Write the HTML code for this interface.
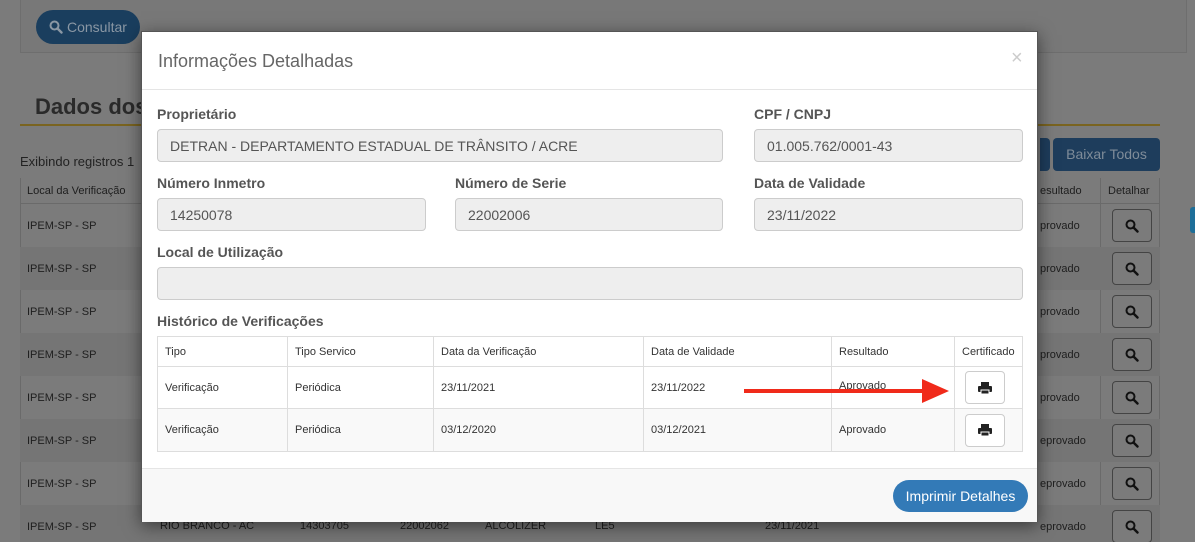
<!DOCTYPE html>
<html><head><meta charset="utf-8"><style>
*{box-sizing:border-box;margin:0;padding:0}
html,body{width:1195px;height:542px;overflow:hidden}
body{background:#7b7b7b;font-family:"Liberation Sans",sans-serif;position:relative;color:#333}
.a{position:absolute}
.bg{color:#1e1e1e;font-size:11px}
.row{position:absolute;left:20px;width:1140px;height:43px}
.lbl{position:absolute;font-size:14px;font-weight:bold;color:#555}
.inp{position:absolute;height:33px;background:#eee;border:1px solid #ccc;border-radius:4px;font-size:14px;color:#555;padding:8px 12px;line-height:16px}
table{border-collapse:collapse;font-size:11px;color:#333}
td,th{border:1px solid #ddd;font-weight:normal;text-align:left;padding:0 7px}
.pb{width:40px;height:33px;border:1px solid #ccc;border-radius:4px;background:#fff;margin-left:3px;display:flex;align-items:center;justify-content:center}
.sb{position:absolute;left:1112px;width:40px;height:33px;border:1px solid #444;border-radius:4px;background:#7b7b7b;display:flex;align-items:center;justify-content:center}
</style></head><body>
<svg width="0" height="0" style="position:absolute"><defs><g id="mg"><circle cx="5.5" cy="5.5" r="4" fill="none" stroke-width="2"/><line x1="8.5" y1="8.5" x2="12.5" y2="12.5" stroke-width="2.4" stroke-linecap="round"/></g></defs></svg>
<div class="a" style="left:20px;top:0;width:1167px;height:53px;border:1px solid #6e6e6e;border-top:none;background:#787878"></div>
<div class="a" style="left:36px;top:10px;width:104px;height:34px;border-radius:17px;background:#1a3e5e;color:#8a97a4;font-size:14px;line-height:34px;padding-left:31px">Consultar</div>
<svg class="a" style="left:49px;top:20px" width="14" height="14"><use href="#mg" stroke="#8a97a4"/></svg>
<div class="a" style="left:35px;top:94px;font-size:22px;font-weight:bold;color:#2a2a2a">Dados dos</div>
<div class="a" style="left:20px;top:124px;width:1140px;height:2px;background:#7a6420"></div>
<div class="a" style="left:20px;top:154px;font-size:13px;color:#222">Exibindo registros 1</div>
<div class="a" style="left:1040px;top:138px;width:10px;height:33px;background:#1e3d5c;border-radius:0 4px 4px 0"></div>
<div class="a" style="left:1053px;top:138px;width:107px;height:33px;background:#1e3d5c;border-radius:4px;color:#7f8c99;font-size:14px;line-height:33px;text-align:center">Baixar Todos</div>
<div class="a" style="left:1190px;top:207px;width:5px;height:26px;background:#1e6f99;border-radius:3px 0 0 3px"></div>
<div class="a" style="left:20px;top:178px;width:1140px;height:364px;border-left:1px solid #6a6a6a;border-right:1px solid #6a6a6a"></div>
<div class="row" style="top:178px;height:26px;border-bottom:1px solid #6a6a6a"></div>
<div class="a bg" style="left:27px;top:185px">Local da Verificação</div>
<div class="a bg" style="left:1040px;top:185px">esultado</div>
<div class="a bg" style="left:1108px;top:185px">Detalhar</div>
<div class="a" style="left:1100px;top:178px;width:1px;height:364px;background:#6a6a6a"></div>
<div class="row" style="top:247px;background:#757575"></div>
<div class="row" style="top:333px;background:#757575"></div>
<div class="row" style="top:419px;background:#757575"></div>
<div class="row" style="top:505px;background:#757575"></div>
<div class="a bg" style="left:27px;top:205px;line-height:43px">IPEM-SP - SP<br>IPEM-SP - SP<br>IPEM-SP - SP<br>IPEM-SP - SP<br>IPEM-SP - SP<br>IPEM-SP - SP<br>IPEM-SP - SP<br>IPEM-SP - SP</div>
<div class="a bg" style="left:1040px;top:205px;line-height:43px">provado<br>provado<br>provado<br>provado<br>provado<br>eprovado<br>eprovado<br>eprovado</div>
<div class="sb" style="top:209px"><svg width="14" height="14"><use href="#mg" stroke="#111"/></svg></div>
<div class="sb" style="top:252px"><svg width="14" height="14"><use href="#mg" stroke="#111"/></svg></div>
<div class="sb" style="top:295px"><svg width="14" height="14"><use href="#mg" stroke="#111"/></svg></div>
<div class="sb" style="top:338px"><svg width="14" height="14"><use href="#mg" stroke="#111"/></svg></div>
<div class="sb" style="top:381px"><svg width="14" height="14"><use href="#mg" stroke="#111"/></svg></div>
<div class="sb" style="top:424px"><svg width="14" height="14"><use href="#mg" stroke="#111"/></svg></div>
<div class="sb" style="top:467px"><svg width="14" height="14"><use href="#mg" stroke="#111"/></svg></div>
<div class="sb" style="top:510px"><svg width="14" height="14"><use href="#mg" stroke="#111"/></svg></div>
<div class="a bg" style="left:160px;top:520px">RIO BRANCO - AC</div>
<div class="a bg" style="left:300px;top:520px">14303705</div>
<div class="a bg" style="left:400px;top:520px">22002062</div>
<div class="a bg" style="left:485px;top:520px">ALCOLIZER</div>
<div class="a bg" style="left:595px;top:520px">LE5</div>
<div class="a bg" style="left:765px;top:520px">23/11/2021</div>

<div class="a" style="left:141px;top:31px;width:897px;height:491px;background:#fff;border:1px solid #555;box-shadow:0 4px 16px rgba(0,0,0,.5)">
<div class="a" style="left:16px;top:19px;font-size:18px;color:#666">Informações Detalhadas</div>
<div class="a" style="left:869px;top:15px;font-size:20px;color:#ccc">×</div>
<div class="a" style="left:0;top:57px;width:895px;height:1px;background:#e5e5e5"></div>
<div class="a" style="left:0;top:436px;width:895px;height:54px;background:#f8f8f8;border-top:1px solid #e5e5e5"></div>
<div class="a" style="left:751px;top:448px;width:135px;height:32px;border-radius:16px;background:#337ab7;color:#fff;font-size:14px;line-height:32px;text-align:center">Imprimir Detalhes</div>
</div>
<div class="lbl" style="left:157px;top:106px">Proprietário</div>
<div class="lbl" style="left:754px;top:106px">CPF / CNPJ</div>
<div class="inp" style="left:157px;top:129px;width:566px">DETRAN - DEPARTAMENTO ESTADUAL DE TRÂNSITO / ACRE</div>
<div class="inp" style="left:754px;top:129px;width:269px">01.005.762/0001-43</div>
<div class="lbl" style="left:157px;top:175px">Número Inmetro</div>
<div class="lbl" style="left:455px;top:175px">Número de Serie</div>
<div class="lbl" style="left:754px;top:175px">Data de Validade</div>
<div class="inp" style="left:157px;top:198px;width:269px">14250078</div>
<div class="inp" style="left:455px;top:198px;width:268px">22002006</div>
<div class="inp" style="left:754px;top:198px;width:269px">23/11/2022</div>
<div class="lbl" style="left:157px;top:244px">Local de Utilização</div>
<div class="inp" style="left:157px;top:267px;width:866px"></div>
<div class="lbl" style="left:157px;top:313px">Histórico de Verificações</div>
<table class="a" style="left:157px;top:336px;width:866px">
<tr style="height:30px"><th style="width:130px">Tipo</th><th style="width:146px">Tipo Servico</th><th style="width:210px">Data da Verificação</th><th style="width:188px">Data de Validade</th><th style="width:123px">Resultado</th><th>Certificado</th></tr>
<tr style="height:42px"><td>Verificação</td><td>Periódica</td><td>23/11/2021</td><td>23/11/2022</td><td style="vertical-align:top;padding-top:13px">Aprovado</td><td><div class="pb"><svg width="14" height="12" viewBox="0 0 14 12"><rect x="3" y="0" width="8" height="4" fill="#222"/><rect x="0" y="4" width="14" height="6" rx="1" fill="#222"/><rect x="3" y="8" width="8" height="4" fill="#222" stroke="#fff" stroke-width="1"/></svg></div></td></tr>
<tr style="height:43px;background:#f9f9f9"><td>Verificação</td><td>Periódica</td><td>03/12/2020</td><td>03/12/2021</td><td>Aprovado</td><td><div class="pb"><svg width="14" height="12" viewBox="0 0 14 12"><rect x="3" y="0" width="8" height="4" fill="#222"/><rect x="0" y="4" width="14" height="6" rx="1" fill="#222"/><rect x="3" y="8" width="8" height="4" fill="#222" stroke="#fff" stroke-width="1"/></svg></div></td></tr>
</table>
<svg class="a" style="left:744px;top:376px" width="205" height="30"><rect x="0" y="13" width="180" height="4" fill="#f02a1a"/><polygon points="178,3 205,15 178,27" fill="#f02a1a"/></svg>
</body></html>
